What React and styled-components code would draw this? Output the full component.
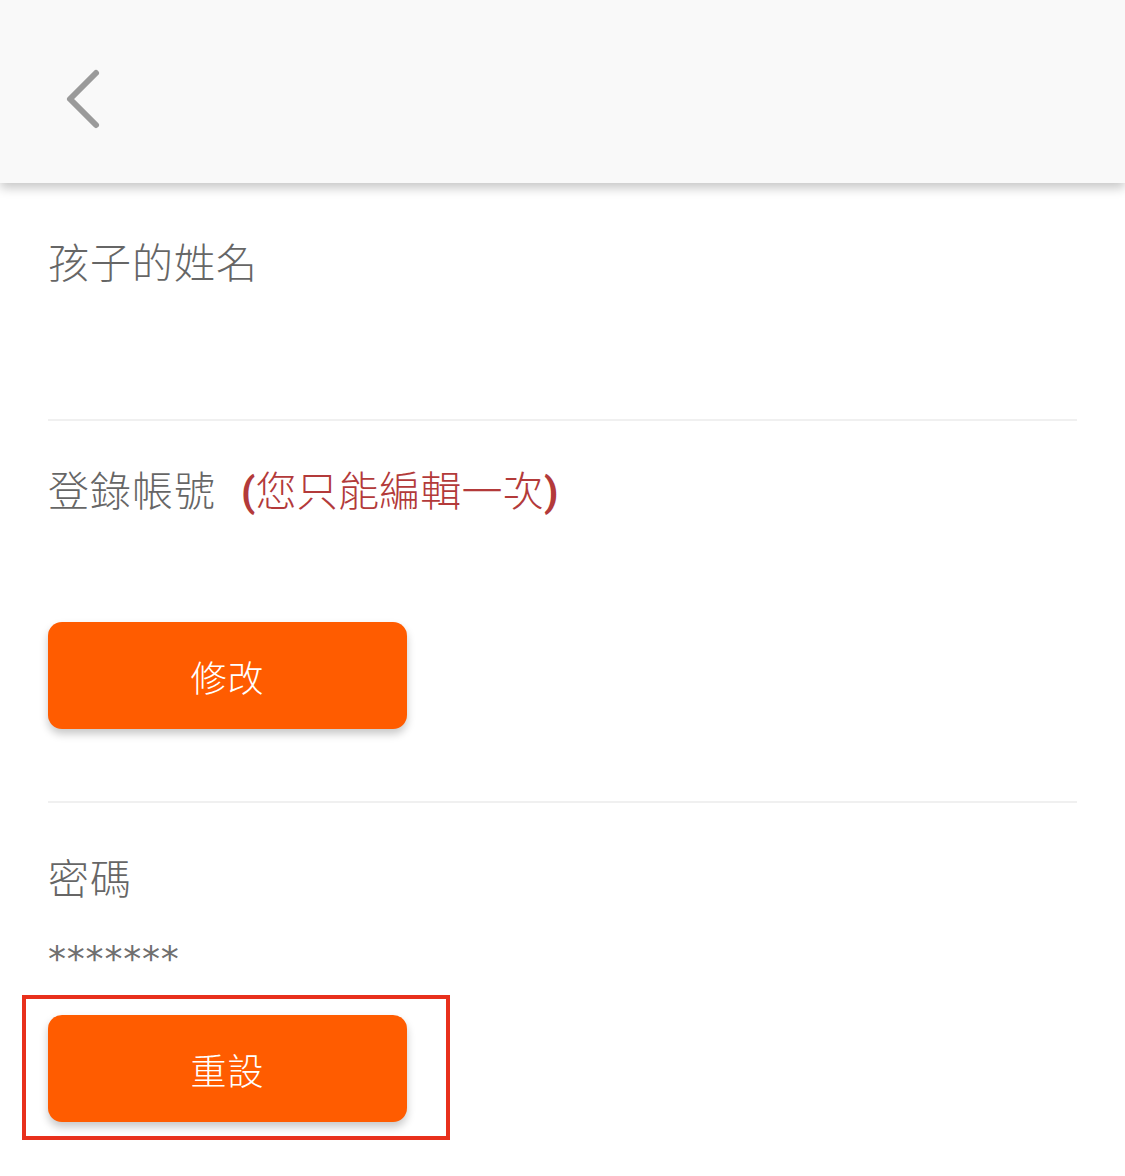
import React from 'react';
import styled, { createGlobalStyle } from 'styled-components';

const GlobalStyle = createGlobalStyle`
  body {
    margin: 0;
    background: #ffffff;
    font-family: "Noto Sans CJK TC", "Noto Sans", Roboto, sans-serif;
  }
`;

const Page = styled.div`
  width: 1125px;
  min-height: 1176px;
  background: #ffffff;
  overflow: hidden;
`;

const Header = styled.header`
  position: relative;
  z-index: 1;
  height: 183px;
  background: #f9f9f9;
  box-shadow: 0 5px 10px rgba(0, 0, 0, 0.22);
  display: flex;
  align-items: center;
  padding-left: 63px;
  box-sizing: border-box;
`;

const BackButton = styled.button`
  border: none;
  background: none;
  padding: 0;
  width: 44px;
  height: 64px;
  display: flex;
  align-items: center;
  justify-content: center;
  cursor: pointer;
  margin-top: 15px;
`;

const Content = styled.main`
  padding: 0 48px;
`;

const Section = styled.section`
  padding-top: ${p => p.$top}px;
  padding-bottom: ${p => p.$bottom}px;
  border-bottom: ${p => (p.$last ? 'none' : '2px solid #f0f0f0')};
`;

const Label = styled.div`
  font-size: 41px;
  font-weight: 300;
  line-height: 49px;
  letter-spacing: 1px;
  color: #666666;
  white-space: nowrap;
`;

const Note = styled.span`
  color: #b33a3a;
  margin-left: 25px;
  letter-spacing: 0.2px;
`;

const Paren = styled.span`
  font-family: Roboto, sans-serif;
  font-weight: 700;
`;

const Masked = styled.div`
  font-family: "DejaVu Sans", sans-serif;
  font-size: 36px;
  line-height: 49px;
  letter-spacing: 0.8px;
  color: #707070;
  margin-top: 33px;
`;

const ActionButton = styled.button`
  width: 359px;
  height: 107px;
  border: none;
  border-radius: 14px;
  background: #ff5c00;
  color: #ffffff;
  font-family: "Noto Sans CJK TC", sans-serif;
  font-weight: 300;
  font-size: 36px;
  letter-spacing: 1px;
  box-shadow: 0 5px 9px rgba(0, 0, 0, 0.22);
  display: block;
  margin-top: ${p => p.$top || 0}px;
  cursor: pointer;
`;

const Highlight = styled.div`
  display: inline-block;
  margin-left: -26px;
  margin-top: ${p => p.$top}px;
  padding: 16px 39px 14px 22px;
  border: 4px solid #e8301c;
`;

function Chevron() {
  return (
    <svg width="44" height="64" viewBox="0 0 44 64">
      <polyline
        points="33,6 7,32 33,58"
        fill="none"
        stroke="#9a9a9a"
        strokeWidth="6"
        strokeLinecap="round"
        strokeLinejoin="round"
      />
    </svg>
  );
}

export default function App() {
  return (
    <Page>
      <GlobalStyle />
      <Header>
        <BackButton aria-label="back">
          <Chevron />
        </BackButton>
      </Header>
      <Content>
        <Section $top={53} $bottom={134}>
          <Label>孩子的姓名</Label>
        </Section>
        <Section $top={43} $bottom={72}>
          <Label>
            登錄帳號
            <Note>
              <Paren>(</Paren>您只能編輯一次<Paren>)</Paren>
            </Note>
          </Label>
          <ActionButton $top={105}>修改</ActionButton>
        </Section>
        <Section $top={49} $bottom={30} $last>
          <Label>密碼</Label>
          <Masked>*******</Masked>
          <Highlight $top={12}>
            <ActionButton>重設</ActionButton>
          </Highlight>
        </Section>
      </Content>
    </Page>
  );
}
